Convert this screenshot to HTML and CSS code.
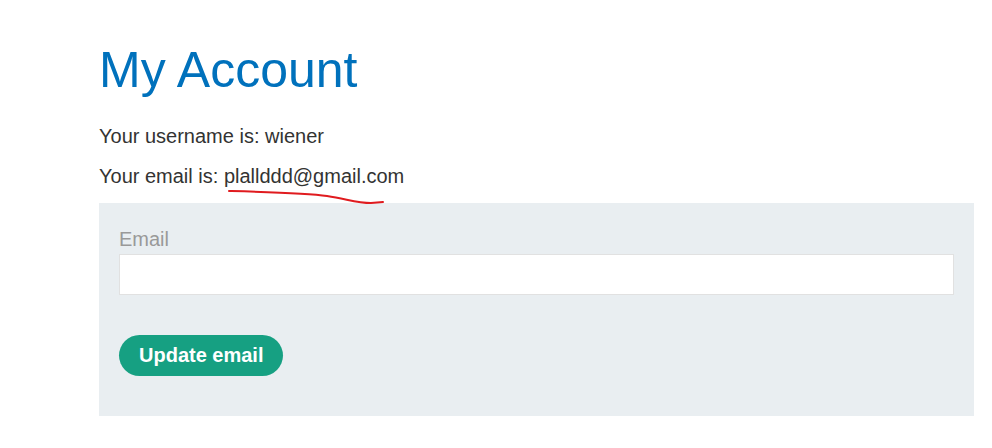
FILE: index.html
```html
<!DOCTYPE html>
<html>
<head>
<meta charset="utf-8">
<link rel="stylesheet" href="styles.css">
</head>
<body>
<div class="container">
  <h1 class="title">My Account</h1>
  <p class="line username-line">Your username is: wiener</p>
  <p class="line email-line">Your email is: <span class="email">plallddd@gmail.com<svg class="scribble" width="160" height="20" viewBox="0 0 160 20"><path d="M2 2 C 40 3, 80 4, 100 7 S 130 14, 144 14 L 156 13" fill="none" stroke="#e01b1f" stroke-width="2" stroke-linecap="round"/></svg></span></p>
  <form class="panel">
    <label class="label">Email</label>
    <input class="input" type="email">
    <button class="button" type="button">Update email</button>
  </form>
</div>
</body>
</html>
```
FILE: styles.css
```css
html, body {
  margin: 0;
  padding: 0;
  background: #fff;
}
body {
  font-family: "Liberation Sans", Arial, sans-serif;
  color: #333332;
}
.container {
  padding: 40px 18px 0 99px;
}
.title {
  margin: 0;
  font-weight: normal;
  font-size: 50px;
  line-height: 60px;
  color: #0071bc;
}
.line {
  margin: 14px 0 0;
  font-size: 20px;
  line-height: 26px;
}
.username-line {
  margin-top: 23px;
}
.email-line {
  margin-top: 14px;
}
.email {
  position: relative;
}
.scribble {
  position: absolute;
  left: 3px;
  top: 24px;
}
.panel {
  margin-top: 14px;
  background: #e9eef1;
  padding: 24px 20px 40px;
  display: flex;
  flex-direction: column;
  align-items: flex-start;
}
.label {
  font-size: 20px;
  line-height: 24px;
  color: #999;
}
.input {
  box-sizing: border-box;
  width: 100%;
  height: 41px;
  margin-top: 3px;
  border: 1px solid #e1e1e1;
  background: #fff;
  padding: 0 8px;
  font-size: 16px;
  outline: none;
}
.button {
  margin-top: 40px;
  height: 41px;
  padding: 0 20px;
  border: none;
  border-radius: 21px;
  background: #16a082;
  color: #fff;
  font-family: "Liberation Sans", Arial, sans-serif;
  font-weight: bold;
  font-size: 20px;
}
```
